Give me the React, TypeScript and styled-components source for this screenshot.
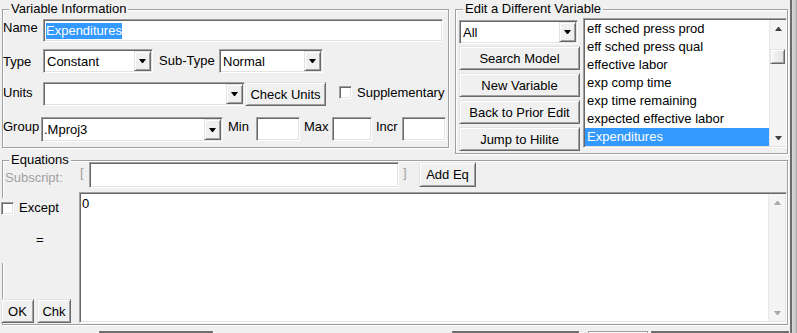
import React from 'react';
import styled, { createGlobalStyle, css } from 'styled-components';

const Global = createGlobalStyle`
  html, body { margin: 0; padding: 0; background: #f0f0f0; }
  body { font-family: "Liberation Sans", Arial, sans-serif; font-size: 13px; color: #000; }
  #root { width: 797px; height: 333px; overflow: hidden; }
`;

const sunken = css`
  box-sizing: border-box;
  border: 1px solid;
  border-color: #a0a0a0 #fff #fff #a0a0a0;
  box-shadow: inset 1px 1px 0 #696969, inset -1px -1px 0 #e3e3e3;
  background: #fff;
`;

const raised = css`
  box-sizing: border-box;
  background: #f0f0f0;
  border: 1px solid;
  border-color: #e3e3e3 #696969 #696969 #e3e3e3;
  box-shadow: inset 1px 1px 0 #fff, inset -1px -1px 0 #a0a0a0;
`;

const Window = styled.div`
  display: flex;
  width: 797px;
  height: 333px;
  overflow: hidden;
  background: #f0f0f0;
`;

const Main = styled.div`
  width: 790px;
  box-sizing: border-box;
  padding-left: 2px;
  display: flex;
  flex-direction: column;
  flex: none;
`;

const Edge = styled.div`
  flex: none;
  width: 7px;
  box-sizing: border-box;
  border-left: 2px solid #6b6b6b;
  background: linear-gradient(to right, #d8d8d8, #c8c8c8 70%, #9a9a9a);
`;

const TopRow = styled.div`
  display: flex;
  align-items: flex-start;
  gap: 6px;
  margin-top: 9px;
`;

const GroupBox = styled.div<{ $w: number; $h: number; $mt?: number }>`
  position: relative;
  box-sizing: border-box;
  flex: none;
  width: ${p => p.$w}px;
  height: ${p => p.$h}px;
  margin-top: ${p => p.$mt ?? 0}px;
  border: 1px solid #a0a0a0;
  box-shadow: inset 1px 1px 0 #fff, 1px 1px 0 #fff;
`;

const Caption = styled.span<{ $left: number }>`
  position: absolute;
  top: -9px;
  left: ${p => p.$left}px;
  padding: 0 2px;
  background: #f0f0f0;
  line-height: 15px;
  white-space: nowrap;
`;

const Form = styled.div`
  display: flex;
  flex-direction: column;
`;

const Row = styled.div<{ $h: number; $mt: number }>`
  display: flex;
  align-items: flex-start;
  height: ${p => p.$h}px;
  margin-top: ${p => p.$mt}px;
`;

const Label = styled.span<{ $w?: number; $top?: number; $ml?: number; $muted?: boolean }>`
  display: block;
  flex: none;
  width: ${p => (p.$w ? `${p.$w}px` : 'auto')};
  margin-top: ${p => p.$top ?? 0}px;
  margin-left: ${p => p.$ml ?? 0}px;
  line-height: 15px;
  white-space: nowrap;
  color: ${p => (p.$muted ? '#a0a0a0' : '#000')};
`;

const Field = styled.div<{ $w: number; $h: number; $pl?: number; $ml?: number }>`
  ${sunken};
  flex: none;
  display: flex;
  align-items: center;
  width: ${p => p.$w}px;
  height: ${p => p.$h}px;
  margin-left: ${p => p.$ml ?? 0}px;
  padding-left: ${p => p.$pl ?? 3}px;
  line-height: 15px;
  white-space: nowrap;
  overflow: hidden;
`;

const Selected = styled.span`
  background: #3399ff;
  color: #fff;
  line-height: 16px;
`;

const ComboText = styled.span`
  flex: 1;
  min-width: 0;
`;

const DropBtn = styled.div`
  ${raised};
  flex: none;
  align-self: stretch;
  width: 17px;
  margin: 1px 1px 1px 0;
  display: flex;
  align-items: center;
  justify-content: center;
  &::after {
    content: '';
    width: 1px;
    border-left: 3px solid transparent;
    border-right: 3px solid transparent;
    border-top: 4px solid #000;
  }
`;

const Button = styled.div<{ $w: number; $h: number; $mt?: number; $ml?: number }>`
  ${raised};
  flex: none;
  width: ${p => p.$w}px;
  height: ${p => p.$h}px;
  margin-top: ${p => p.$mt ?? 0}px;
  margin-left: ${p => p.$ml ?? 0}px;
  display: flex;
  align-items: center;
  justify-content: center;
  line-height: 15px;
  white-space: nowrap;
`;

const Checkbox = styled.div<{ $mt?: number; $ml?: number }>`
  ${sunken};
  flex: none;
  width: 13px;
  height: 13px;
  margin-top: ${p => p.$mt ?? 0}px;
  margin-left: ${p => p.$ml ?? 0}px;
`;

const EditBody = styled.div`
  display: flex;
  align-items: flex-start;
  padding-left: 3px;
  gap: 3px;
`;

const ButtonCol = styled.div`
  display: flex;
  flex-direction: column;
  width: 121px;
  margin-top: 10px;
`;

const ListBox = styled.div`
  ${sunken};
  flex: none;
  width: 204px;
  height: 130px;
  margin-top: 8px;
  padding: 1px 0 1px 1px;
  display: flex;
`;

const ListItems = styled.div`
  flex: 1;
  display: flex;
  flex-direction: column;
  padding-top: 0px;
`;

const ListItem = styled.div<{ $sel?: boolean }>`
  height: 18px;
  line-height: 18px;
  padding-left: 2px;
  white-space: nowrap;
  background: ${p => (p.$sel ? '#3399ff' : 'transparent')};
  color: ${p => (p.$sel ? '#fff' : '#000')};
`;

const ScrollBar = styled.div`
  flex: none;
  width: 17px;
  display: flex;
  flex-direction: column;
  background: #f4f4f4;
  border-left: 1px solid #e8e8e8;
  box-sizing: border-box;
`;

const ScrollArrow = styled.div<{ $dir: 'up' | 'down'; $disabled?: boolean }>`
  flex: none;
  height: 17px;
  display: flex;
  align-items: center;
  justify-content: center;
  ${p => (p.$dir === 'down' ? 'margin-top: auto;' : '')}
  &::after {
    content: '';
    width: 1px;
    border-left: 3px solid transparent;
    border-right: 3px solid transparent;
    ${p =>
      p.$dir === 'up'
        ? `border-bottom: 4px solid ${p.$disabled ? '#a8a8a8' : '#404040'};`
        : `border-top: 4px solid ${p.$disabled ? '#a8a8a8' : '#404040'};`}
  }
`;

const Thumb = styled.div`
  ${raised};
  flex: none;
  height: 15px;
  width: 15px;
  margin: 12px 0 0 0;
  background: linear-gradient(to right, #f6f6f6, #e2e2e2);
`;

const EqBody = styled.div`
  display: flex;
  flex-direction: column;
  padding-top: 1px;
`;

const SubRow = styled.div`
  display: flex;
  align-items: flex-start;
  height: 26px;
`;

const Body = styled.div`
  display: flex;
  height: 131px;
  margin-top: 4px;
`;

const LeftCol = styled.div`
  flex: none;
  width: 78px;
  margin-left: -2px;
  display: flex;
  flex-direction: column;
`;

const Cover = styled.div`
  margin-top: 6px;
  height: 65px;
  box-sizing: border-box;
  padding-top: 2px;
  background: #f0f0f0;
  display: flex;
  flex-direction: column;
`;

const ExceptRow = styled.div`
  display: flex;
  align-items: flex-start;
  height: 15px;
`;

const ButtonRow = styled.div`
  margin-top: auto;
  display: flex;
  gap: 3px;
`;

const TextArea = styled.div`
  ${sunken};
  flex: 1;
  display: flex;
  padding: 1px;
`;

const TextContent = styled.div`
  flex: 1;
  padding: 2px 0 0 1px;
  line-height: 15px;
`;

const BottomBar = styled.div`
  display: flex;
  margin-top: 6px;
  height: 10px;
`;

const BarTop = styled.div<{ $ml: number; $w: number; $light?: boolean }>`
  flex: none;
  margin-left: ${p => p.$ml}px;
  width: ${p => p.$w}px;
  box-sizing: border-box;
  ${p =>
    p.$light
      ? 'background: #fbfbfb; border: 1px solid #a0a0a0; border-bottom: none;'
      : 'background: #f0f0f0; border-top: 2px solid #6e6e6e; border-left: 1px solid #8a8a8a; border-right: 1px solid #8a8a8a;'}
`;

const listItems = [
  'eff sched press prod',
  'eff sched press qual',
  'effective labor',
  'exp comp time',
  'exp time remaining',
  'expected effective labor',
  'Expenditures',
];

export default function App() {
  return (
    <>
      <Global />
      <Window>
        <Main>
          <TopRow>
            <GroupBox $w={447} $h={139}>
              <Caption $left={6}>Variable Information</Caption>
              <Form>
                <Row $h={23} $mt={9}>
                  <Label $w={40} $top={1}>Name</Label>
                  <Field $w={400} $h={23} $pl={2}>
                    <Selected>Expenditures</Selected>
                  </Field>
                </Row>
                <Row $h={24} $mt={7}>
                  <Label $w={40} $top={5}>Type</Label>
                  <Field $w={110} $h={24}>
                    <ComboText>Constant</ComboText>
                    <DropBtn />
                  </Field>
                  <Label $w={60} $top={4} $ml={6}>Sub-Type</Label>
                  <Field $w={104} $h={24}>
                    <ComboText>Normal</ComboText>
                    <DropBtn />
                  </Field>
                </Row>
                <Row $h={24} $mt={9}>
                  <Label $w={40} $top={3}>Units</Label>
                  <Field $w={202} $h={24}>
                    <ComboText />
                    <DropBtn />
                  </Field>
                  <Button $w={81} $h={24} $ml={0}>Check Units</Button>
                  <Checkbox $mt={4} $ml={13} />
                  <Label $top={3} $ml={5}>Supplementary</Label>
                </Row>
                <Row $h={25} $mt={11}>
                  <Label $w={38} $top={2}>Group</Label>
                  <Field $w={182} $h={25} $pl={2}>
                    <ComboText>.Mproj3</ComboText>
                    <DropBtn />
                  </Field>
                  <Label $w={28} $top={2} $ml={5}>Min</Label>
                  <Field $w={44} $h={24} />
                  <Label $w={28} $top={2} $ml={4}>Max</Label>
                  <Field $w={40} $h={24} />
                  <Label $w={26} $top={2} $ml={4}>Incr</Label>
                  <Field $w={44} $h={24} />
                </Row>
              </Form>
            </GroupBox>

            <GroupBox $w={333} $h={145}>
              <Caption $left={7}>Edit a Different Variable</Caption>
              <EditBody>
                <ButtonCol>
                  <Field $w={119} $h={24}>
                    <ComboText>All</ComboText>
                    <DropBtn />
                  </Field>
                  <Button $w={121} $h={24} $mt={2}>Search Model</Button>
                  <Button $w={121} $h={24} $mt={3}>New Variable</Button>
                  <Button $w={121} $h={24} $mt={3}>Back to Prior Edit</Button>
                  <Button $w={121} $h={24} $mt={3}>Jump to Hilite</Button>
                </ButtonCol>
                <ListBox>
                  <ListItems>
                    {listItems.map(item => (
                      <ListItem key={item} $sel={item === 'Expenditures'}>
                        {item}
                      </ListItem>
                    ))}
                  </ListItems>
                  <ScrollBar>
                    <ScrollArrow $dir="up" />
                    <Thumb />
                    <ScrollArrow $dir="down" />
                  </ScrollBar>
                </ListBox>
              </EditBody>
            </GroupBox>
          </TopRow>

          <GroupBox $w={786} $h={165} $mt={6}>
            <Caption $left={6}>Equations</Caption>
            <EqBody>
              <SubRow>
                <Label $w={75} $ml={2} $top={8} $muted>Subscript:</Label>
                <Label $w={9} $top={3} $muted>[</Label>
                <Field $w={310} $h={26} />
                <Label $w={16} $top={3} $ml={4} $muted>]</Label>
                <Button $w={57} $h={25}>Add Eq</Button>
              </SubRow>
              <Body>
                <LeftCol>
                  <Cover>
                    <ExceptRow>
                      <Checkbox $mt={2} />
                      <Label $ml={5}>Except</Label>
                    </ExceptRow>
                    <Label $ml={35} $top={17}>=</Label>
                  </Cover>
                  <ButtonRow>
                    <Button $w={33} $h={24}>OK</Button>
                    <Button $w={34} $h={24}>Chk</Button>
                  </ButtonRow>
                </LeftCol>
                <TextArea>
                  <TextContent>0</TextContent>
                  <ScrollBar>
                    <ScrollArrow $dir="up" $disabled />
                    <ScrollArrow $dir="down" $disabled />
                  </ScrollBar>
                </TextArea>
              </Body>
            </EqBody>
          </GroupBox>

          <BottomBar>
            <BarTop $ml={97} $w={114} />
            <BarTop $ml={239} $w={127} />
            <BarTop $ml={9} $w={60} $light />
            <BarTop $ml={3} $w={138} />
          </BottomBar>
        </Main>
        <Edge />
      </Window>
    </>
  );
}
